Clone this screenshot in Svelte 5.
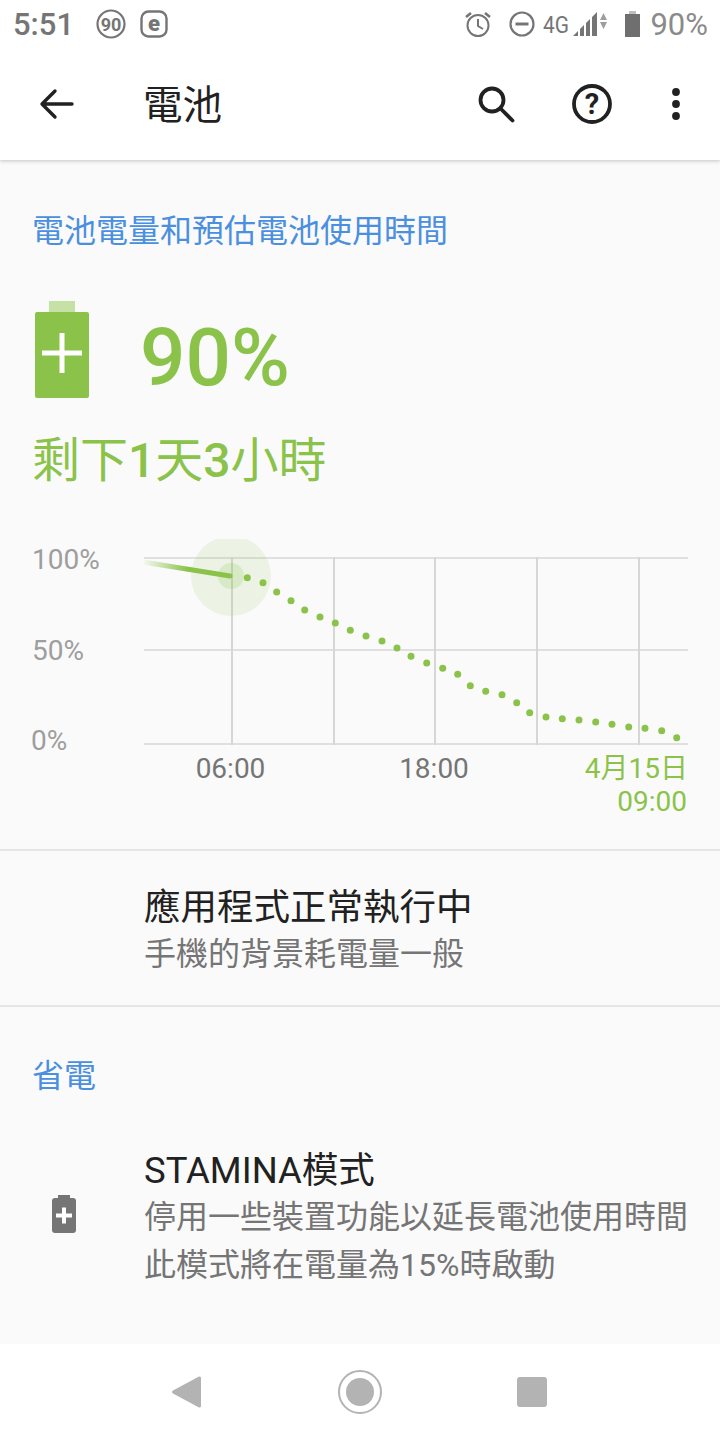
<script>
  const dots = [
    [247.3,577.7],[263,582.7],[276.7,592],[291,600.7],[304.7,610],[320,617],[335.3,623],[350.3,630.3],
    [366,636],[382,641],[397,648],[411,656.3],[426.7,663],[442.7,668.3],[457.7,674.3],[470.3,685.7],
    [485.7,691.3],[502,694.7],[516.7,702.7],[529.7,712.7],[546,717],[562.3,718.7],[579,720],[595.7,722],
    [612,724.3],[628.7,727],[645,728.3],[661.7,730.7],[676.7,737.7]
  ];
  const gridY = [558, 650, 744];
  const gridX = [232, 334, 435, 537, 639];
</script>

<style>
  :global(body) {
    margin: 0;
    background: #fafafa;
  }

  .phone {
    width: 720px;
    height: 1440px;
    display: flex;
    flex-direction: column;
    background: #fafafa;
    font-family: Roboto, "Noto Sans CJK TC", sans-serif;
    overflow: hidden;
  }

  .top {
    background: #fff;
    box-shadow: 0 1px 4px rgba(0, 0, 0, 0.22);
    flex: none;
    position: relative;
  }

  .status {
    height: 48px;
    display: flex;
    align-items: center;
    padding: 0 12px 0 13px;
    color: #757575;
  }

  .clock {
    font-size: 31px;
    font-weight: 500;
    margin-right: 21px;
    color: #757575;
  }

  .status svg { display: block; flex: none; }
  .status .e { margin-left: 13px; }
  .spacer { flex: 1; }
  .status .net { margin-left: 16px; }
  .status .sig { margin-left: 7px; }
  .status .batt { margin-left: 12px; margin-right: 10px; }

  .pct {
    font-size: 31px;
    color: #8a8a8a;
  }

  .appbar {
    height: 112px;
    display: flex;
    align-items: center;
    position: relative;
  }

  .back { margin-left: 36px; }

  .appbar h1 {
    margin: 0 0 6px 67px;
    font-size: 39.5px;
    font-weight: 400;
    color: #212121;
    flex: 1;
  }

  .appbar .search { margin-right: 57px; }
  .appbar .help { margin-right: 59px; }
  .appbar .more { margin-right: 39px; }

  .label {
    margin: 0;
    padding-left: 32px;
    font-size: 32px;
    line-height: 44px;
    font-weight: 400;
    color: #4a8fe0;
  }

  .usage {
    height: 691px;
    flex: none;
    border-bottom: 2px solid #e6e6e6;
    box-sizing: border-box;
    display: flex;
    flex-direction: column;
    padding-top: 49px;
  }

  .level {
    display: flex;
    align-items: flex-start;
    margin-top: 48px;
    padding-left: 35px;
    gap: 51px;
  }

  .level svg { display: block; }

  .level span {
    margin-top: 9px;
    font-size: 80px;
    line-height: 96px;
    font-weight: 500;
    color: #8bc34a;
  }

  .remain {
    margin: 25px 0 0 32px;
    font-size: 48px;
    line-height: 60px;
    color: #8bc34a;
  }

  .remain b { font-weight: 500; }

  .chart {
    position: absolute;
    left: 0;
    top: 0;
    pointer-events: none;
  }

  .chart text {
    font-family: Roboto, "Noto Sans CJK TC", sans-serif;
    font-size: 28px;
  }

  .chart .pc { fill: #9e9e9e; }
  .chart .time { fill: #757575; }
  .chart .end { fill: #8bc34a; }

  .row {
    padding-left: 144px;
  }

  .row h3 {
    margin: 0;
    font-size: 36.5px;
    line-height: 44px;
    font-weight: 400;
    color: #212121;
  }

  .row p {
    margin: 0;
    font-size: 32px;
    line-height: 48px;
    color: #757575;
  }

  .app-state {
    height: 156px;
    flex: none;
    box-sizing: border-box;
    border-bottom: 2px solid #e6e6e6;
    padding-top: 35px;
  }

  .saving { padding-top: 47px; }

  .stamina {
    display: flex;
    align-items: center;
    margin-top: 51px;
  }

  .stamina svg { margin: 0 68px 10px 52px; flex: none; }
  .stamina .row { padding-left: 0; }

  .nav {
    margin-top: auto;
    height: 96px;
    flex: none;
    background: #fff;
    display: flex;
    align-items: center;
    padding-left: 171px;
  }

  .nav svg { display: block; flex: none; }
  .nav .home { margin-left: 135px; }
  .nav .recent { margin-left: 135px; }
</style>

<div class="phone">
  <header class="top">
    <div class="status">
      <span class="clock">5:51</span>
      <svg width="32" height="32" viewBox="0 0 32 32">
        <circle cx="16" cy="16" r="13.5" fill="none" stroke="#757575" stroke-width="2.2" />
        <text x="16" y="22.5" text-anchor="middle" font-size="18" font-weight="700" fill="#757575" font-family="Roboto">90</text>
      </svg>
      <svg class="e" width="28" height="28" viewBox="0 0 28 28">
        <rect x="1.5" y="1.5" width="25" height="25" rx="7" fill="none" stroke="#757575" stroke-width="2.4" />
        <text x="14" y="21" text-anchor="middle" font-size="22" font-weight="900" fill="#757575" font-family="Roboto">e</text>
      </svg>
      <span class="spacer"></span>
      <svg width="28" height="28" viewBox="0 0 28 28" fill="none" stroke="#757575">
        <circle cx="14" cy="15.5" r="10.5" stroke-width="2" />
        <path d="M14 9v7l5 3" stroke-width="2" />
        <path d="M2 7l5-4M26 7l-5-4" stroke-width="2.6" />
      </svg>
      <svg class="net" width="28" height="28" viewBox="0 0 28 28" fill="none" stroke="#757575">
        <circle cx="14" cy="14" r="11.5" stroke-width="2.2" />
        <path d="M7.5 14h13" stroke-width="3" />
      </svg>
      <svg class="sig" width="70" height="28" viewBox="0 0 70 28">
        <text x="0" y="23" font-size="23" fill="#757575" font-family="Roboto" textLength="26" lengthAdjust="spacingAndGlyphs">4G</text>
        <path d="M30 26l5-5v5zM37 26v-7l4-4v11zM43 26V13l4-4v17zM49 26V7l5-5v24z" fill="#757575" />
        <path d="M57 10l3.500-7L64 10zM57 12l3.500 7L64 12z" fill="#9e9e9e" />
      </svg>
      <svg class="batt" width="15" height="26" viewBox="0 0 15 26">
        <rect x="4" y="0" width="7" height="4" fill="#bdbdbd" />
        <rect x="0" y="3" width="15" height="23" fill="#6f6f6f" />
      </svg>
      <span class="pct">90%</span>
    </div>
    <div class="appbar">
      <svg class="back" width="40" height="32" viewBox="0 0 40 32" fill="none" stroke="#212121" stroke-width="3.400" stroke-linecap="round" stroke-linejoin="round">
        <path d="M36 16H7M19 3L6 16l13 13" />
      </svg>
      <h1>電池</h1>
      <svg class="search" width="38" height="38" viewBox="0 0 38 38" fill="none" stroke="#212121" stroke-linecap="round">
        <circle cx="15" cy="15" r="11.500" stroke-width="3.800" />
        <path d="M24 24l11.500 11.500" stroke-width="3.800" />
      </svg>
      <svg class="help" width="40" height="40" viewBox="0 0 40 40">
        <circle cx="20" cy="20" r="18" fill="none" stroke="#212121" stroke-width="3.800" />
        <text x="20" y="30" text-anchor="middle" font-size="29" font-weight="700" fill="#212121" font-family="Roboto">?</text>
      </svg>
      <svg class="more" width="10" height="32" viewBox="0 0 10 32" fill="#212121">
        <circle cx="5" cy="4" r="3.900" />
        <circle cx="5" cy="16" r="3.900" />
        <circle cx="5" cy="28" r="3.900" />
      </svg>
    </div>
  </header>

  <section class="usage">
    <h2 class="label">電池電量和預估電池使用時間</h2>
    <div class="level">
      <svg width="54" height="97" viewBox="0 0 54 97">
        <rect x="14" y="0" width="26" height="12" fill="#c5e1a5" />
        <rect x="0" y="11" width="54" height="86" rx="2" fill="#8bc34a" />
        <path d="M7 49.500h40v5H7zM24.500 32h5v40h-5z" fill="#fff" />
      </svg>
      <span>90%</span>
    </div>
    <p class="remain">剩下<b>1</b>天<b>3</b>小時</p>
  </section>

  <section class="app-state row">
    <h3>應用程式正常執行中</h3>
    <p>手機的背景耗電量一般</p>
  </section>

  <section class="saving">
    <h2 class="label">省電</h2>
    <div class="stamina">
      <svg width="24" height="38" viewBox="0 0 24 38">
        <rect x="6" y="0" width="12" height="4" fill="#757575" />
        <rect x="0" y="3" width="24" height="35" rx="3" fill="#757575" />
        <path d="M4 18.500h16v4H4zM10 12.500h4v16h-4z" fill="#fff" />
      </svg>
      <div class="row">
        <h3>STAMINA模式</h3>
        <p>停用一些裝置功能以延長電池使用時間</p>
        <p>此模式將在電量為15%時啟動</p>
      </div>
    </div>
  </section>

  <nav class="nav">
    <svg width="32" height="34" viewBox="0 0 32 34">
      <path d="M28 1.500a1.500 1.500 0 0 1 2 1.500v28a1.500 1.500 0 0 1-2 1.500L2 18.500a1.700 1.700 0 0 1 0-3z" fill="#b3b3b3" />
    </svg>
    <svg class="home" width="44" height="44" viewBox="0 0 44 44">
      <circle cx="22" cy="22" r="21" fill="none" stroke="#b3b3b3" stroke-width="2" />
      <circle cx="22" cy="22" r="14" fill="#b3b3b3" />
    </svg>
    <svg class="recent" width="30" height="30" viewBox="0 0 30 30">
      <rect width="30" height="30" rx="3" fill="#b3b3b3" />
    </svg>
  </nav>

  <svg class="chart" width="720" height="1440" viewBox="0 0 720 1440">
    <defs>
      <linearGradient id="fade" gradientUnits="userSpaceOnUse" x1="144" y1="561" x2="231" y2="576">
        <stop offset="0" stop-color="#8bc34a" stop-opacity="0.05" />
        <stop offset="0.5" stop-color="#8bc34a" />
      </linearGradient>
      <clipPath id="top-clip"><rect x="0" y="539" width="720" height="200" /></clipPath>
    </defs>
    {#each gridY as y}
      <line x1="144" x2="688" y1={y} y2={y} stroke="#e0e0e0" stroke-width="2" />
    {/each}
    {#each gridX as x}
      <line x1={x} x2={x} y1="557" y2="745" stroke="#d6d6d6" stroke-width="2" />
    {/each}
    <circle cx="231" cy="576" r="40" fill="#8bc34a" fill-opacity="0.12" clip-path="url(#top-clip)" />
    <circle cx="231" cy="576" r="13" fill="#8bc34a" fill-opacity="0.2" />
    <path d="M146 562.500L230 576" fill="none" stroke="url(#fade)" stroke-width="5" stroke-linecap="round" />
    {#each dots as [x, y]}
      <circle cx={x} cy={y} r="3.500" fill="#8bc34a" />
    {/each}
    <text class="pc" x="32" y="569">100%</text>
    <text class="pc" x="32" y="660">50%</text>
    <text class="pc" x="31" y="750">0%</text>
    <text class="time" x="230.500" y="778" text-anchor="middle">06:00</text>
    <text class="time" x="434" y="778" text-anchor="middle">18:00</text>
    <text class="end" x="688" y="778" text-anchor="end">4月15日</text>
    <text class="end" x="687" y="811" text-anchor="end">09:00</text>
  </svg>
</div>
